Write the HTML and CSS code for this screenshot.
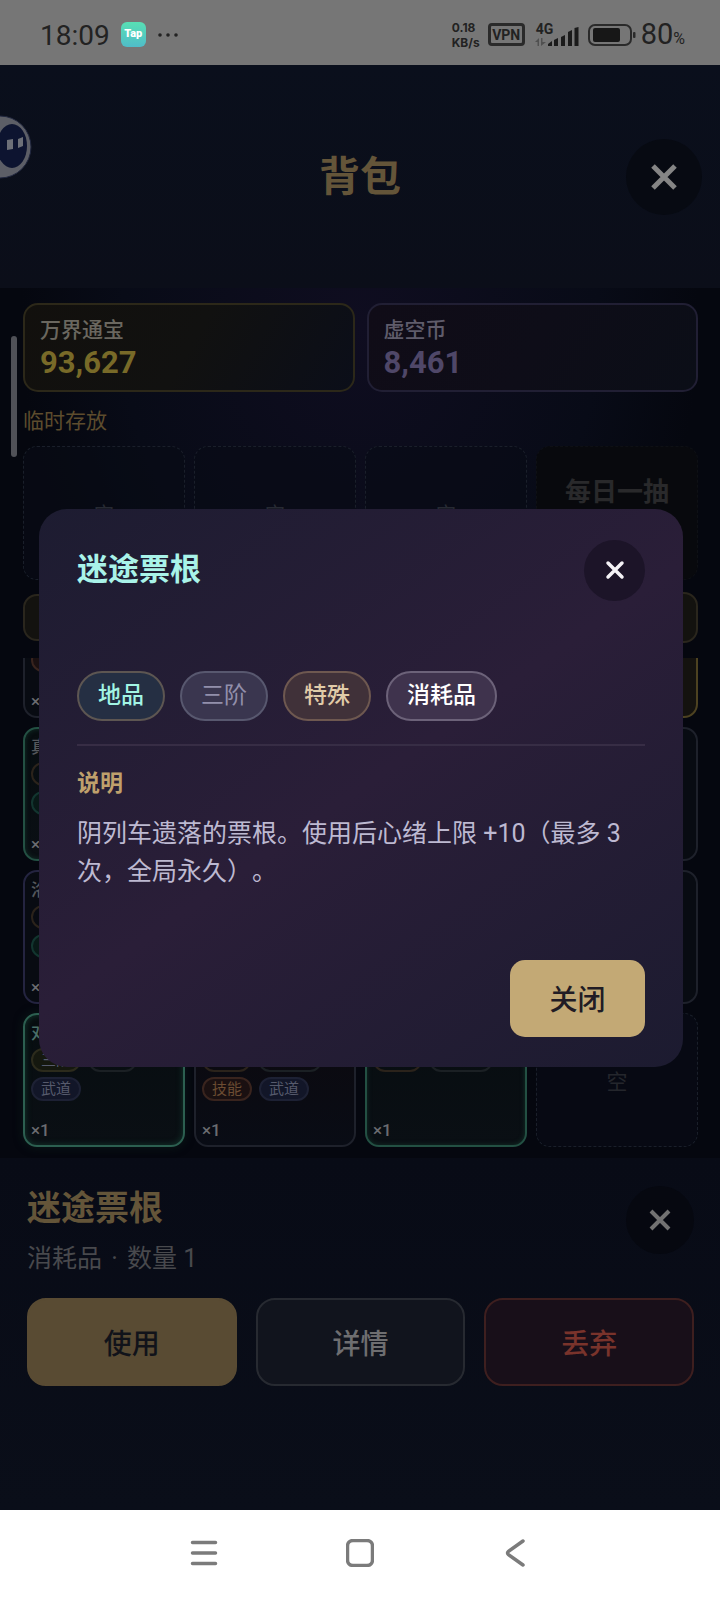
FILE: index.html
```
<!DOCTYPE html>
<html lang="zh-CN">
<head>
<meta charset="utf-8">
<meta name="viewport" content="width=device-width, initial-scale=1">
<title>背包</title>
<link rel="stylesheet" href="styles.css">
</head>
<body>
<div class="status">
  <span class="time">18:09</span>
  <span class="tap">Tap</span>
  <svg class="more" width="22" height="6" viewBox="0 0 22 6"><circle cx="3" cy="3" r="1.800"/><circle cx="11" cy="3" r="1.800"/><circle cx="19" cy="3" r="1.800"/></svg>
  <span class="rate"><span>0.18</span><span>KB/s</span></span>
  <span class="vpn">VPN</span>
  <span class="signal">
    <span class="net">4G</span>
    <svg width="44" height="24" viewBox="0 0 44 24">
      <g fill="#505050"><path d="M4 15v8H2.500v-4H0zM6 23v-8h1.500v4H11z"/></g>
      <g fill="#1b1b1b"><path d="M13 23v-2l4-3v5zM19 23v-6l4-2v8zM26 23v-9l4-2v11zM33 23V9l4-2v16zM39.500 23V5l4-1v19z"/></g>
    </svg>
  </span>
  <svg class="battery" width="48" height="22" viewBox="0 0 48 22"><rect x="1" y="1" width="42" height="20" rx="6" fill="none" stroke="#2a2a2a" stroke-width="2"/><rect x="5" y="4" width="27" height="14" rx="2" fill="#171717"/><rect x="45" y="8" width="2.500" height="6" rx="1" fill="#2a2a2a"/></svg>
  <span class="pct">80<small>%</small></span>
</div>

<div class="app">
  <header class="head">
    <h1>背包</h1>
    <button class="round round-head" aria-label="关闭背包"><svg width="26" height="26" viewBox="0 0 26 26"><path d="M2 2l22 22M24 2L2 24"/></svg></button>
  </header>

  <section class="top">
    <div class="wallets">
      <div class="wallet gold"><span>万界通宝</span><b>93,627</b></div>
      <div class="wallet violet"><span>虚空币</span><b>8,461</b></div>
    </div>
    <h2>临时存放</h2>
    <div class="slots">
      <div class="slot empty">空</div>
      <div class="slot empty">空</div>
      <div class="slot empty">空</div>
      <div class="slot daily">每日一抽</div>
    </div>
    <div class="tools"><div class="tool"></div><div class="tool tall"></div></div>
  </section>

  <section class="bag">
    <div class="slots">
      <div class="slot item plain"><b></b><div class="pills"><i class="pill amber wide"></i></div><div class="pills"><i class="pill rust wide"></i></div><em>×1</em></div>
      <div class="slot item plain"></div>
      <div class="slot item plain"></div>
      <div class="slot item yellow"></div>

      <div class="slot item green"><b>真</b><div class="pills"><i class="pill amber wide"></i></div><div class="pills"><i class="pill teal wide"></i></div><em>×1</em></div>
      <div class="slot item plain"></div>
      <div class="slot item plain"></div>
      <div class="slot item plain"></div>

      <div class="slot item purple"><b>洛</b><div class="pills"><i class="pill amber wide"></i></div><div class="pills"><i class="pill teal wide"></i></div><em>×1</em></div>
      <div class="slot item plain"></div>
      <div class="slot item plain"></div>
      <div class="slot item plain"></div>

      <div class="slot item green glow"><b>对</b><div class="pills"><i class="pill olive">三阶</i><i class="pill grey wide"></i></div><div class="pills"><i class="pill blue">武道</i></div><em>×1</em></div>
      <div class="slot item plain warm"><b></b><div class="pills"><i class="pill amber wide"></i><i class="pill grey wider"></i></div><div class="pills"><i class="pill rust">技能</i><i class="pill blue">武道</i></div><em>×1</em></div>
      <div class="slot item green"><b></b><div class="pills"><i class="pill amber wide"></i><i class="pill grey wider"></i></div><em>×1</em></div>
      <div class="slot empty last">空</div>
    </div>
  </section>

  <section class="detail">
    <div class="detail-head">
      <div>
        <h2>迷途票根</h2>
        <p>消耗品 <span class="dot">·</span> 数量 1</p>
      </div>
      <button class="round round-detail" aria-label="收起"><svg width="22" height="22" viewBox="0 0 22 22"><path d="M2 2l18 18M20 2L2 20"/></svg></button>
    </div>
    <div class="actions">
      <button class="act use">使用</button>
      <button class="act info">详情</button>
      <button class="act drop">丢弃</button>
    </div>
  </section>

  <svg class="buddy" width="34" height="66" viewBox="0 0 34 66">
    <circle cx="0" cy="33" r="31" fill="#5c5e66" stroke="#20263e" stroke-width="1"/>
    <ellipse cx="12" cy="32" rx="15" ry="22" fill="#0d1430"/>
    <path d="M7 26l6-1v10l-6 1zM18 25l5-2v9l-5 2z" fill="#6d7078"/>
  </svg>
  <div class="thumb"></div>

  <div class="overlay">
    <div class="modal" role="dialog" aria-labelledby="modal-title">
      <div class="modal-head">
        <h2 id="modal-title">迷途票根</h2>
        <button class="round round-modal" aria-label="关闭"><svg width="20" height="20" viewBox="0 0 20 20"><path d="M3 3l14 14M17 3L3 17"/></svg></button>
      </div>
      <div class="tags">
        <span class="tag t-teal">地品</span>
        <span class="tag t-grey">三阶</span>
        <span class="tag t-gold">特殊</span>
        <span class="tag t-white">消耗品</span>
      </div>
      <h3>说明</h3>
      <p>阴列车遗落的票根。使用后心绪上限 +10（最多 3 次，全局永久）。</p>
      <button class="ok">关闭</button>
    </div>
  </div>
</div>

<nav class="nav">
  <button aria-label="菜单"><svg width="28" height="28" viewBox="0 0 28 28"><path d="M2.500 3.500h23M2.500 14h23M2.500 24.500h23"/></svg></button>
  <button aria-label="主页"><svg width="28" height="28" viewBox="0 0 28 28"><rect x="1.500" y="1.500" width="25" height="25" rx="5.500"/></svg></button>
  <button aria-label="返回"><svg width="28" height="28" viewBox="0 0 28 28"><path d="M21 2L6.500 12.300q-2 1.700 0 3.400L21 26"/></svg></button>
</nav>
</body>
</html>
```
FILE: styles.css
```
* { box-sizing: border-box; }
body {
  margin: 0;
  height: 100vh;
  display: flex;
  flex-direction: column;
  background: #080b16;
  font-family: Roboto, "Noto Sans CJK SC", sans-serif;
}
h1, h2, h3, p { margin: 0; }
button { font-family: inherit; padding: 0; border: 0; cursor: pointer; }
i, em { font-style: normal; }

/* Status bar */
.status {
  flex: none;
  height: 65px;
  display: flex;
  align-items: center;
  padding: 4px 35px 0 40px;
  background: #767676;
  color: #222;
}
.time { padding-top: 2px; font-size: 28px; }
.tap {
  width: 25px;
  height: 25px;
  margin-left: 11px;
  border-radius: 6px;
  background: linear-gradient(#58dfb4, #50bcc8);
  color: #fff;
  font-size: 11px;
  font-weight: 900;
  line-height: 24px;
  text-align: center;
}
.more { margin-left: 11px; fill: #222; }
.rate {
  display: flex;
  flex-direction: column;
  margin-left: auto;
  font-family: Inter, sans-serif;
  font-size: 12px;
  font-weight: 700;
  line-height: 15px;
}
.vpn {
  margin-left: 8px;
  width: 37px;
  height: 23px;
  border: 3px solid #2a2a2a;
  border-radius: 4px;
  font-size: 14px;
  font-weight: 700;
  line-height: 18px;
  text-align: center;
}
.signal { position: relative; height: 24px; margin-left: 10px; }
.net { position: absolute; left: 1px; top: 0; font-size: 14px; font-weight: 700; line-height: 12px; }
.battery { margin-left: 9px; }
.pct { margin-left: 5px; padding-top: 4px; font-size: 29px; line-height: 30px; }
.pct small { font-size: 16px; }

/* App shell */
.app {
  position: relative;
  flex: 1;
  min-height: 0;
  display: flex;
  flex-direction: column;
  background: radial-gradient(340px 420px at 50% 260px, #0f0d20, #080b17 70%, #05070f);
}
.head {
  flex: none;
  display: grid;
  grid-template-columns: 1fr auto 1fr;
  align-items: center;
  height: 223px;
  padding: 0 18px;
  background: linear-gradient(#0a0f1c, #0b0e19);
}
.head h1 { grid-column: 2; color: #645539; font-size: 41px; line-height: 50px; }
.round {
  display: flex;
  align-items: center;
  justify-content: center;
  flex: none;
  border-radius: 50%;
  background: #060810;
}
.round svg { fill: none; stroke: #858585; stroke-width: 5; }
.round-head { width: 76px; height: 76px; justify-self: end; background: #070a12; }
.round-detail { width: 68px; height: 68px; }
.round-detail svg { stroke: #727272; stroke-width: 4; }
.round-modal { width: 61px; height: 61px; background: #1c1428; }
.round-modal svg { stroke: #f4f2f6; stroke-linecap: round; stroke-width: 3.500; }

.top { flex: none; padding: 15px 22px 15px 23px; }
.wallets { display: grid; grid-template-columns: 1fr 1fr; gap: 12px; }
.wallet {
  display: flex;
  flex-direction: column;
  height: 89px;
  padding: 11px 15px;
  border: 2px solid;
  border-radius: 15px;
}
.wallet span { font-size: 21px; font-weight: 500; line-height: 28px; }
.wallet b { margin-top: 1px; font-size: 31px; line-height: 36px; }
.gold { border-color: #2c2819; background: linear-gradient(120deg, #12100d, #111110 50%, #0b0e19); color: #6a675f; }
.gold b { color: #786a28; }
.violet { border-color: #211f34; background: linear-gradient(120deg, #100c17, #0e0d18 50%, #0b0e17); color: #5f5c6b; }
.violet b { color: #4f4768; }
.top h2 { margin: 15px 0 11px; color: #5d4c2d; font-size: 21px; font-weight: 400; line-height: 28px; }

.slots { display: grid; grid-template-columns: repeat(4, 1fr); gap: 9px; }
.slot { height: 134px; border-radius: 14px; }
.empty {
  display: flex;
  align-items: center;
  justify-content: center;
  border: 1px dashed #1a1f2a;
  background: rgba(8, 12, 22, 0.6);
  color: #272a33;
  font-size: 20px;
}
.last { color: #24262c; font-size: 21px; }
.daily {
  padding-top: 27px;
  border: 1px dashed #0e1015;
  background: #08090d;
  color: #29292b;
  font-size: 26px;
  font-weight: 700;
  line-height: 36px;
  text-align: center;
}
.tools { display: flex; justify-content: space-between; align-items: center; height: 51px; margin-top: 12px; }
.tool { width: 30%; height: 47px; border: 2px solid #2a261d; border-radius: 14px; background: #13120f; }
.tool.tall { height: 51px; }

/* Bag grid, scrolled to its end */
.bag {
  flex: 1;
  min-height: 0;
  display: flex;
  flex-direction: column;
  justify-content: flex-end;
  overflow: hidden;
  padding: 0 22px 11px 23px;
}
.item {
  display: flex;
  flex-direction: column;
  padding: 7px 6px 5px;
  border: 2px solid;
  background: #080b12;
}
.item b { height: 26px; color: #55585c; font-size: 17px; font-weight: 500; line-height: 22px; }
.item em { margin-top: auto; color: #6b6c70; font-size: 17px; font-weight: 500; line-height: 20px; }
.plain { border-color: #1e212b; }
.warm { background: linear-gradient(#0c090e, #090c15); }
.yellow { border-color: #4d4221; background: #14120f; }
.purple { border-color: #242440; }
.green { border-color: #235043; background: linear-gradient(#070d10, #0a0f14); box-shadow: inset 0 0 5px #123028; }
.glow { border-color: #2c5f50; box-shadow: inset 0 0 6px #14382e, 0 0 10px #0a1a18; }
.glow b { color: #4a6f68; }
.pills { display: flex; gap: 7px; height: 29px; }
.pill {
  height: 24px;
  padding: 0 8px;
  border: 2px solid #23262f;
  border-radius: 12px;
  color: #565a6c;
  font-size: 15px;
  line-height: 20px;
}
.wide { width: 49px; }
.wider { width: 64px; }
.amber { border-color: #2b231b; }
.rust { border-color: #39241e; background: #1a1011; color: #6b4c32; }
.teal { border-color: #12352f; background: #081917; }
.olive { border-color: #2c2b1c; background: #15180f; }
.grey { border-color: #1b2024; }
.blue { border-color: #1d2134; background: #121628; }

/* Selected item */
.detail { flex: none; height: 352px; padding: 28px 26px 0 27px; background: linear-gradient(#080b16, #0a0e19); }
.detail-head { display: flex; justify-content: space-between; height: 112px; }
.detail h2 { color: #645539; font-size: 34px; line-height: 44px; }
.detail p { margin-top: 12px; color: #48494d; font-size: 25px; line-height: 34px; }
.dot { margin: 0 3px; }
.actions { display: grid; grid-template-columns: repeat(3, 1fr); gap: 19px; }
.act { height: 88px; border: 2px solid; border-radius: 19px; font-size: 28px; font-weight: 500; }
.use { border-color: #594b33; background: #594b33; color: #11131a; }
.info { border-color: #272a31; background: #11141d; color: #6e6e70; }
.drop { border-color: #3e1f1f; background: #180f19; color: #79332b; }

/* Floating helper and scroll thumb lie over the page */
.buddy { position: absolute; left: 0; top: 49px; }
.thumb { position: absolute; left: 11px; top: 271px; width: 6px; height: 121px; border-radius: 3px; background: #505157; }

/* Dialog */
.overlay { position: absolute; inset: 0; display: flex; align-items: center; padding: 0 37px 0 39px; }
.modal {
  width: 100%;
  display: flex;
  flex-direction: column;
  padding: 31px 38px 30px;
  border-radius: 28px;
  background: linear-gradient(145deg, #1d1c31 0%, #2a1e38 50%, #1c1b30 100%);
}
.modal-head { display: flex; justify-content: space-between; align-items: center; }
.modal-head h2 { color: #a9f3e9; font-size: 31px; line-height: 40px; }
.tags { display: flex; gap: 15px; margin-top: 70px; padding-bottom: 23px; border-bottom: 2px solid #372d45; }
.tag {
  height: 50px;
  padding: 0 19px;
  border: 2px solid;
  border-radius: 25px;
  font-size: 23px;
  font-weight: 500;
  line-height: 46px;
}
.t-teal { border-color: #5d5652; background: #252f43; color: #a2f5e4; }
.t-grey { border-color: #58586f; background: #3a364f; color: #928fab; font-weight: 400; }
.t-gold { border-color: #6e5850; background: #403139; color: #e0cba8; }
.t-white { border-color: #6c6279; background: #3f334d; color: #fff; }
.modal h3 { margin-top: 22px; color: #bfa06c; font-size: 23px; line-height: 32px; }
.modal p { margin-top: 15px; color: #bdb9d1; font-size: 25px; line-height: 38px; text-spacing-trim: space-all; }
.ok {
  align-self: flex-end;
  width: 135px;
  height: 77px;
  margin-top: 69px;
  border-radius: 15px;
  background: #c3a975;
  color: #211c24;
  font-size: 28px;
  font-weight: 500;
}

/* System navigation */
.nav { flex: none; display: flex; justify-content: center; gap: 128px; height: 91px; padding-top: 29px; background: #fff; }
.nav button { width: 28px; height: 28px; background: none; }
.nav svg { display: block; fill: none; stroke: #7b7b7b; stroke-width: 3.500; stroke-linecap: round; }
```
